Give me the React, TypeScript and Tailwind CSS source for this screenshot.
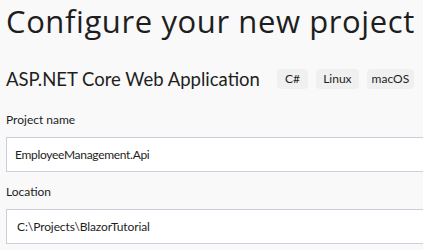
import React from "react";

const font = { fontFamily: '"Segoe UI", Lato, "Open Sans", sans-serif' };
const titleFont = { fontFamily: '"Segoe UI", "Open Sans", sans-serif' };

function Tag({ label, width }: { label: string; width: string }) {
  return (
    <span
      className={`${width} h-[20px] flex items-center justify-center rounded-[4px] bg-[#f0f0f0] text-[12px] text-[#1e1e1e]`}
    >
      {label}
    </span>
  );
}

export default function App() {
  return (
    <div
      className="w-[423px] h-[250px] overflow-hidden bg-[#f9f9f9] text-[#1e1e1e] pl-[6px] pt-[1px]"
      style={font}
    >
      <h1
        className="text-[31px] leading-[40px] tracking-[0.6px] whitespace-nowrap"
        style={titleFont}
      >
        Configure your new project
      </h1>

      <div className="mt-[28px] h-[20px] flex items-center whitespace-nowrap">
        <span className="text-[18.5px] leading-[20px]">ASP.NET Core Web Application</span>
        <div className="ml-[17px] flex gap-[8px]">
          <Tag label="C#" width="w-[31px]" />
          <Tag label="Linux" width="w-[43px]" />
          <Tag label="macOS" width="w-[47px]" />
        </div>
      </div>

      <div className="mt-[21px] text-[12px] leading-[20px]">Project name</div>
      <div className="mt-[7px] w-[520px] h-[35px] flex items-center border border-[#cccedb] bg-white pl-[8px] text-[12px] tracking-[-0.3px]">
        EmployeeManagement.Api
      </div>

      <div className="mt-[10px] text-[12px] leading-[20px]">Location</div>
      <div className="mt-[7px] w-[520px] h-[35px] flex items-center border border-[#cccedb] bg-white pl-[10px] text-[12px] tracking-[-0.1px]">
        C:\Projects\BlazorTutorial
      </div>
    </div>
  );
}
